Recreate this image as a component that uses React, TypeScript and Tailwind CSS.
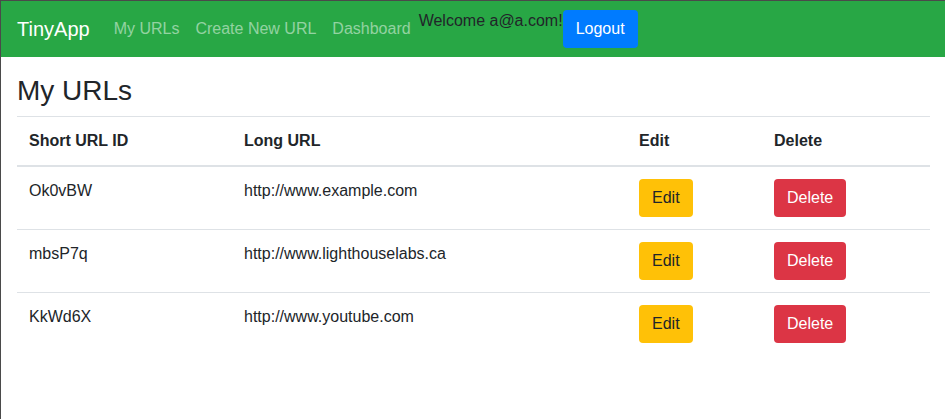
const urls = [
  { id: 'Ok0vBW', long: 'http://www.example.com' },
  { id: 'mbsP7q', long: 'http://www.lighthouselabs.ca' },
  { id: 'KkWd6X', long: 'http://www.youtube.com' },
]

const Navbar = () => (
  <nav className="flex items-center bg-[#28a745] px-4 py-2">
    <a className="mr-4 py-[5px] text-xl leading-[30px] text-white">TinyApp</a>
    <a className="px-2 py-2 leading-6 text-white/50">My URLs</a>
    <a className="px-2 py-2 leading-6 text-white/50">Create New URL</a>
    <a className="px-2 py-2 leading-6 text-white/50">Dashboard</a>
    <span className="self-start leading-6 text-[#212529]">Welcome a@a.com!</span>
    <button className="rounded border border-transparent bg-[#007bff] px-3 py-1.5 leading-6 text-white">Logout</button>
  </nav>
)

const cell = 'border-t border-[#dee2e6] p-3 align-top leading-6'
const head = 'border-t border-b-2 border-[#dee2e6] p-3 align-bottom font-bold leading-6'

export default function App() {
  return (
    <div
      className="min-h-[419px] border-t border-l border-[#4a4a4a] bg-white text-base text-[#212529]"
      style={{ fontFamily: '"Liberation Sans", Arial, sans-serif' }}
    >
      <Navbar />
      <main className="pl-4 pr-[15px] pt-[17px]">
        <h3 className="mb-2 text-[28px] leading-[1.2] font-normal">My URLs</h3>
        <table className="w-full border-collapse text-left">
          <colgroup>
            <col className="w-[215px]" />
            <col className="w-[395px]" />
            <col className="w-[135px]" />
            <col />
          </colgroup>
          <thead>
            <tr>
              <th className={head}>Short URL ID</th>
              <th className={head}>Long URL</th>
              <th className={head}>Edit</th>
              <th className={head}>Delete</th>
            </tr>
          </thead>
          <tbody>
            {urls.map((u) => (
              <tr key={u.id}>
                <td className={cell}>{u.id}</td>
                <td className={cell}>{u.long}</td>
                <td className={cell}>
                  <button className="rounded border border-transparent bg-[#ffc107] px-3 py-1.5 leading-6 text-[#212529]">Edit</button>
                </td>
                <td className={cell}>
                  <button className="rounded border border-transparent bg-[#dc3545] px-3 py-1.5 leading-6 text-white">Delete</button>
                </td>
              </tr>
            ))}
          </tbody>
        </table>
      </main>
    </div>
  )
}
